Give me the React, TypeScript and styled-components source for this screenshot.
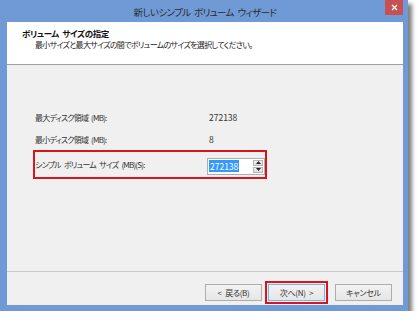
import * as React from "react";
import styled, { createGlobalStyle } from "styled-components";

const GlobalStyle = createGlobalStyle`
  html, body {
    margin: 0;
    padding: 0;
    background: #ffffff;
  }
  body {
    font-family: "Noto Sans CJK JP", "Noto Sans", sans-serif;
    font-feature-settings: "palt";
    color: #333333;
  }
`;

type Field = {
  label: string;
  value: string;
};

const fields: Field[] = [
  { label: "最大ディスク領域 (MB):", value: "272138" },
  { label: "最小ディスク領域 (MB):", value: "8" },
];

const App = () => {
  return (
    <>
      <GlobalStyle />
      <Window>
        <TitleBar>
          <Title>新しいシンプル ボリューム ウィザード</Title>
          <CloseButton>
            <svg width="7" height="7" viewBox="0 0 7 7">
              <path d="M1 1 L6 6 M6 1 L1 6" stroke="#fff" strokeWidth="1.3" />
            </svg>
          </CloseButton>
        </TitleBar>
        <Client>
          <Header>
            <HeaderTitle>ボリューム サイズの指定</HeaderTitle>
            <HeaderSub>最小サイズと最大サイズの間でボリュームのサイズを選択してください。</HeaderSub>
          </Header>
          <Body>
            {fields.map((f) => (
              <FieldRow key={f.label}>
                <Label>{f.label}</Label>
                <Value>{f.value}</Value>
              </FieldRow>
            ))}
            <FieldRow $marked>
              <Label>シンプル ボリューム サイズ (MB)(S):</Label>
              <SpinBox>
                <SpinText>
                  <Selected>272138</Selected>
                </SpinText>
                <SpinButtons>
                  <SpinButton>
                    <svg width="5" height="3" viewBox="0 0 5 3">
                      <path d="M0 3 L2.5 0 L5 3 Z" fill="#222" />
                    </svg>
                  </SpinButton>
                  <SpinButton>
                    <svg width="5" height="3" viewBox="0 0 5 3">
                      <path d="M0 0 L2.5 3 L5 0 Z" fill="#222" />
                    </svg>
                  </SpinButton>
                </SpinButtons>
              </SpinBox>
            </FieldRow>
          </Body>
          <Footer>
            <WizardButton>&lt; 戻る(B)</WizardButton>
            <WizardButton $primary $marked>次へ(N) &gt;</WizardButton>
            <WizardButton $apart>キャンセル</WizardButton>
          </Footer>
        </Client>
      </Window>
    </>
  );
};

const Window = styled.div`
  width: 408px;
  height: 311px;
  box-sizing: border-box;
  display: flex;
  flex-direction: column;
  background: #6f9ad6;
  padding: 0 5px 6px 7px;
  box-shadow: 4px 4px 4px rgba(0, 0, 0, 0.5);
`;

const TitleBar = styled.div`
  height: 22px;
  flex-shrink: 0;
  display: flex;
  align-items: center;
  justify-content: center;
  position: relative;
`;

const Title = styled.div`
  font-size: 9.5px;
  letter-spacing: -0.6px;
  word-spacing: 2px;
  line-height: 22px;
  color: #2a2a2a;
  margin-top: 2px;
`;

const CloseButton = styled.div`
  position: absolute;
  top: 0;
  right: 0;
  width: 18px;
  height: 15px;
  background: #c75050;
  display: flex;
  align-items: center;
  justify-content: center;
`;

const Client = styled.div`
  flex: 1;
  display: flex;
  flex-direction: column;
  background: #f0f0f0;
`;

const Header = styled.div`
  height: 43px;
  background: #ffffff;
  border-bottom: 1px solid #a0a0a0;
  padding: 5px 0 0 15px;
  box-sizing: border-box;
  flex-shrink: 0;
`;

const HeaderTitle = styled.div`
  font-size: 8.5px;
  font-weight: bold;
  letter-spacing: -0.4px;
  word-spacing: 2px;
  line-height: 12px;
  color: #111;
`;

const HeaderSub = styled.div`
  font-size: 8px;
  line-height: 11px;
  padding-left: 13px;
  color: #222;
  letter-spacing: -0.7px;
`;

const Body = styled.div`
  flex: 1;
  display: flex;
  flex-direction: column;
  padding-top: 41px;
`;

const FieldRow = styled.div<{ $marked?: boolean }>`
  display: flex;
  align-items: center;
  height: ${(p) => (p.$marked ? "29px" : "22px")};
  width: 234px;
  box-sizing: border-box;
  margin-left: 26px;
  border: 2px solid ${(p) => (p.$marked ? "#d8141c" : "transparent")};
`;

const Label = styled.div`
  width: 174px;
  flex-shrink: 0;
  white-space: nowrap;
  font-size: 8px;
  letter-spacing: -0.8px;
  word-spacing: 2px;
  color: #333;
`;

const Value = styled.div`
  font-size: 8.5px;
  color: #333;
`;

const SpinBox = styled.div`
  display: flex;
  height: 17px;
  margin-left: -2px;
  margin-top: 3px;
  border: 1px solid #abadb3;
  background: #ffffff;
  box-sizing: border-box;
`;

const SpinText = styled.div`
  width: 44px;
  display: flex;
  align-items: center;
  padding-left: 1px;
  font-size: 8.5px;
`;

const Selected = styled.span`
  background: #3399ff;
  color: #ffffff;
  line-height: 12px;
  padding: 0 1px;
`;

const SpinButtons = styled.div`
  width: 10px;
  display: flex;
  flex-direction: column;
  gap: 1px;
  padding: 1px 1px 1px 0;
`;

const SpinButton = styled.div`
  flex: 1;
  display: flex;
  align-items: center;
  justify-content: center;
  background: linear-gradient(#f4f4f4, #dcdcdc);
  border: 1px solid #b5b5b5;
`;

const Footer = styled.div`
  height: 34px;
  box-sizing: border-box;
  border-top: 1px solid #c8c8c8;
  display: flex;
  justify-content: flex-end;
  align-items: flex-start;
  padding: 12px 11px 0 0;
  flex-shrink: 0;
`;

const WizardButton = styled.div<{ $primary?: boolean; $marked?: boolean; $apart?: boolean }>`
  width: 57px;
  height: 17px;
  box-sizing: border-box;
  display: flex;
  align-items: center;
  justify-content: center;
  font-size: 8px;
  letter-spacing: -0.3px;
  word-spacing: 2px;
  color: #333;
  background: linear-gradient(#f2f2f2, #e6e6e6);
  border: 1px solid ${(p) => (p.$primary ? "#7eb4ea" : "#adadad")};
  margin-left: ${(p) => (p.$apart ? "10px" : "6px")};
  outline: ${(p) => (p.$marked ? "2px solid #d8141c" : "none")};
  outline-offset: 1px;
`;

export default App;
